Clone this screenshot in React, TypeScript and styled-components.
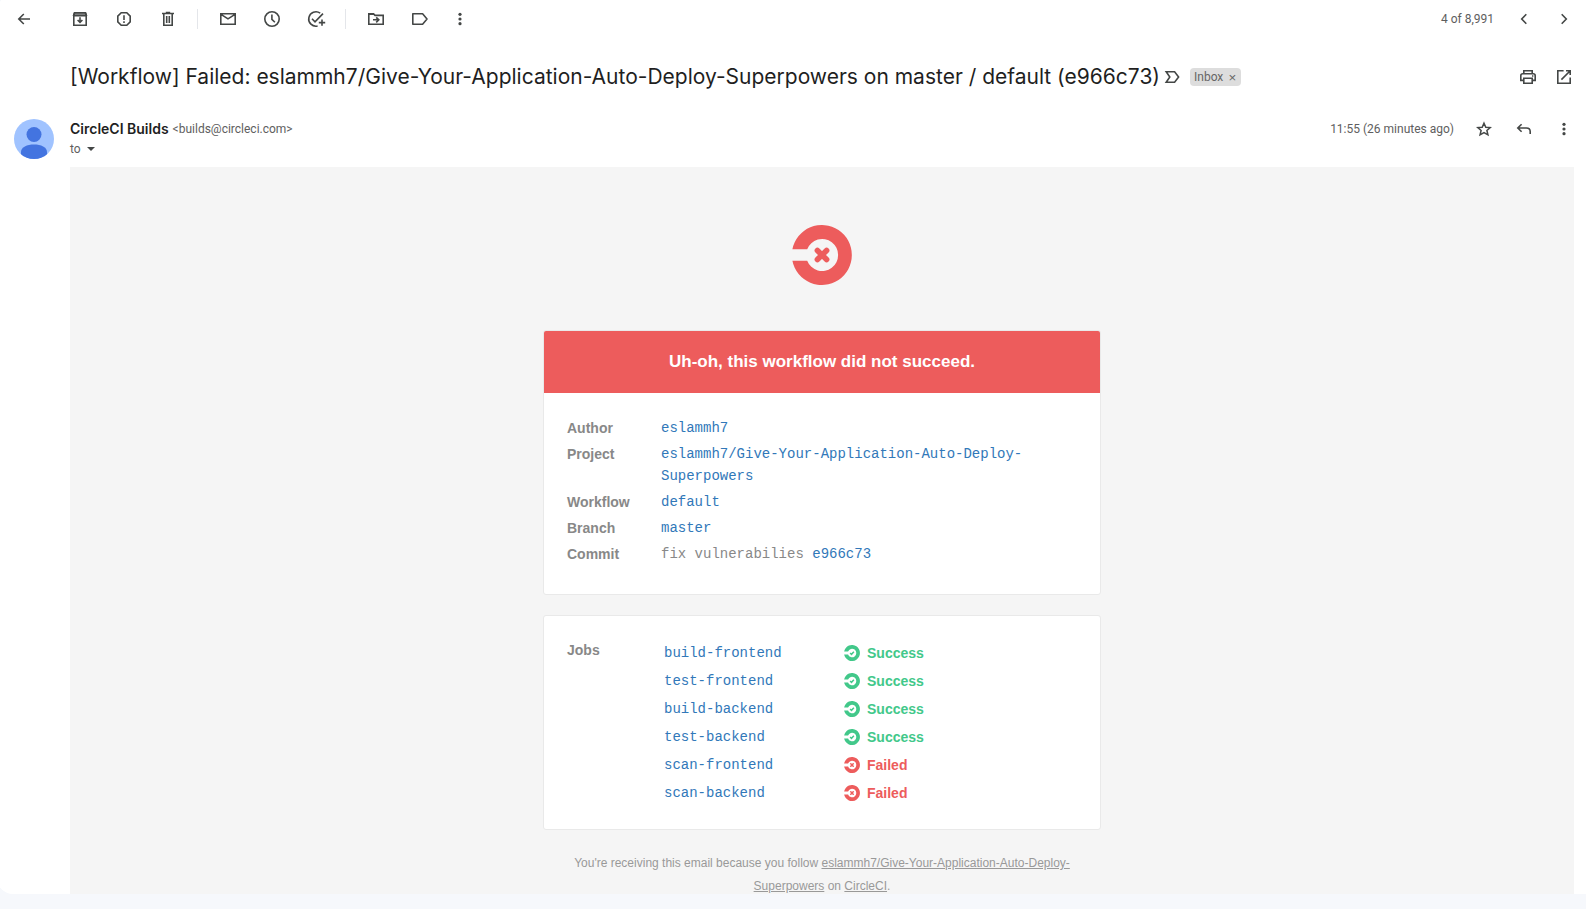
import React from 'react';
import styled, { createGlobalStyle } from 'styled-components';

const GlobalStyle = createGlobalStyle`
  *, *::before, *::after { box-sizing: border-box; }
  html, body { height: 100%; }
  body {
    margin: 0;
    overflow: hidden;
    background: #f6f8fc;
    color: #1f1f1f;
    font-family: Inter, 'Liberation Sans', sans-serif;
  }
`;

/* ---------- mail frame ---------- */

const Panel = styled.main`
  display: flex;
  flex-direction: column;
  height: calc(100vh - 10px);
  margin: -5px 0 0 -3px;
  padding: 5px 0 0 3px;
  overflow: hidden;
  background: #fff;
  border-radius: 16px 0 0 16px;
`;

const Toolbar = styled.header`
  display: flex;
  flex: none;
  align-items: center;
  height: 38px;
  padding: 0 12px 0 14px;
`;

const Actions = styled.div<{ $gap: number }>`
  display: flex;
  align-items: center;
  gap: ${(p) => p.$gap}px;
`;

const BackSlot = styled.div`
  display: flex;
  width: 56px;
`;

const Divider = styled.span`
  width: 1px;
  height: 20px;
  margin: 0 -4px 0 -5px;
  background: #e4e6ea;
`;

const Pager = styled.div`
  display: flex;
  align-items: center;
  gap: 20px;
  margin-left: auto;
`;

const IconButton = styled.button`
  display: flex;
  flex: none;
  width: 20px;
  height: 20px;
  padding: 0;
  border: 0;
  background: none;
  color: #444746;
  cursor: pointer;
`;

const Glyph = styled.svg`
  display: block;
  width: 20px;
  height: 20px;
  fill: none;
  stroke: currentColor;
  stroke-width: 1.6;
`;

const Muted = styled.span`
  color: #5e5e5e;
  font-family: Roboto, 'Liberation Sans', sans-serif;
  font-size: 12px;
  line-height: 20px;
  white-space: nowrap;
`;

const SubjectRow = styled.div`
  display: flex;
  flex: none;
  align-items: center;
  height: 78px;
  padding: 0 12px 0 70px;
`;

const Subject = styled.h1`
  margin: 0 2px 0 0;
  font-size: 21px;
  font-weight: 400;
  line-height: 28px;
  white-space: nowrap;
`;

const Chip = styled.span`
  display: flex;
  align-items: center;
  gap: 4px;
  height: 18px;
  margin-left: 8px;
  padding: 0 4px;
  border-radius: 4px;
  background: #ddd;
  color: #666;
  font-family: Roboto, 'Liberation Sans', sans-serif;
  font-size: 12px;
`;

const ChipClose = styled.button`
  display: flex;
  align-items: center;
  justify-content: center;
  width: 10px;
  height: 16px;
  padding: 0;
  border: 0;
  background: none;
  color: #666;
  cursor: pointer;
`;

const PushRight = styled.div`
  display: flex;
  align-items: center;
  gap: 16px;
  margin-left: auto;
`;

const SenderRow = styled.div`
  display: grid;
  flex: none;
  grid-template-columns: 56px 1fr auto;
  align-items: start;
  padding: 3px 12px 8px 14px;
`;

const Avatar = styled.svg`
  display: block;
  width: 40px;
  height: 40px;
`;

const SenderLine = styled.div<{ $gap: number }>`
  display: flex;
  align-items: center;
  gap: ${(p) => p.$gap}px;
  height: 20px;
`;

const SenderName = styled.strong`
  font-size: 14px;
  font-weight: 600;
  line-height: 20px;
`;

const DetailsButton = styled.button`
  display: flex;
  width: 20px;
  height: 20px;
  padding: 0;
  border: 0;
  background: none;
  color: #444746;
  cursor: pointer;
`;

const SenderMeta = styled.div`
  display: flex;
  align-items: center;
  gap: 20px;
`;

/* ---------- email content ---------- */

const Letter = styled.article`
  display: flex;
  flex: 1;
  flex-direction: column;
  align-items: center;
  min-height: 0;
  margin: 0 12px 0 70px;
  padding: 58px 20px 0;
  overflow: hidden;
  background: #f5f5f5;
  color: #888;
  font-family: 'Liberation Sans', Arial, sans-serif;
`;

const StatusMark = styled.svg<{ $size: number; $color: string }>`
  display: block;
  flex: none;
  width: ${(p) => p.$size}px;
  height: ${(p) => p.$size}px;
  color: ${(p) => p.$color};
`;

const Card = styled.section`
  flex: none;
  width: 100%;
  max-width: 558px;
  margin-bottom: 20px;
  overflow: hidden;
  border: 1px solid #e9e9e9;
  border-radius: 3px;
  background: #fff;
`;

const LogoSlot = styled.div`
  margin-bottom: 45px;
`;

const Banner = styled.h2`
  margin: 0;
  padding: 20px;
  background: #ed5c5c;
  color: #fff;
  font-size: 17px;
  font-weight: 700;
  line-height: 22px;
  text-align: center;
`;

const CardBody = styled.div<{ $top: number; $bottom: number }>`
  padding: ${(p) => p.$top}px 23px ${(p) => p.$bottom}px;
`;

const Facts = styled.table`
  width: 100%;
  border-collapse: collapse;
  font-size: 14px;
  line-height: 22px;

  th, td { padding: 0 0 4px; text-align: left; vertical-align: top; }
  th { width: 94px; font-weight: 700; }
  td { font-family: 'Liberation Mono', 'Courier New', monospace; }
`;

const JobsLayout = styled.div`
  display: grid;
  grid-template-columns: 97px 1fr;
`;

const JobsTitle = styled.h3`
  margin: 0;
  font-size: 14px;
  font-weight: 700;
  line-height: 22px;
`;

const JobsTable = styled.table`
  border-collapse: collapse;
  font-size: 14px;

  td { height: 28px; padding: 0; line-height: 22px; }
  td:first-child {
    width: 180px;
    font-family: 'Liberation Mono', 'Courier New', monospace;
  }
`;

const Status = styled.div<{ $color: string }>`
  display: flex;
  align-items: center;
  gap: 7px;
  color: ${(p) => p.$color};
  font-weight: 700;
`;

const MailLink = styled.a`
  color: #3178b9;
  text-decoration: none;
`;

const Footer = styled.footer`
  flex: none;
  width: 100%;
  max-width: 512px;
  padding-top: 2px;
  color: #999;
  font-size: 12px;
  line-height: 23px;
  text-align: center;

  a { color: #999; text-decoration: underline; }
`;

/* ---------- icons ---------- */

const icons = {
  back: <path d="M16 10H5M9.8 5 4.8 10l5 5" />,
  archive: (
    <>
      <path d="M4.5 3.8h11l.8 2.4H3.7z" fill="#b5b6b6" />
      <path d="M3.8 6v10.2h12.4V6L15.3 3.8H4.7zM3.8 6.7h12.4M10 8.2v5M7.6 11l2.4 2.4 2.4-2.4" />
    </>
  ),
  report: (
    <>
      <path d="M7.2 3.8h5.6l3.4 3.4v5.6l-3.4 3.4H7.2l-3.4-3.4V7.2z" />
      <path d="M10 6.3v4.6M10 12.3v1.6" />
    </>
  ),
  trash: <path d="M4 4.5h12M7.8 3.6h4.4M5.8 4.8v11.4h8.4V4.8M8.7 7v7M11.3 7v7" />,
  mail: <path d="M2.8 4.8h14.4v10.4H2.8zM3 5.4l7 4.5 7-4.5" />,
  snooze: (
    <>
      <circle cx="10" cy="10" r="7.2" />
      <path d="M9.9 5.6v4.7l3 3" />
    </>
  ),
  addTask: <path d="M14.2 4.2A7.2 7.2 0 1 0 11.6 17M6 9.8l3 3L17 4.6M16 10.4v6.4M12.8 13.6h6.4" />,
  move: (
    <>
      <path d="M2 4h5.6l1.8 2H2z" fill="currentColor" stroke="none" />
      <path d="M2.8 4.8h4.6l1.6 1.6h8.2v8.8H2.8zM7 10.8h5M10.2 8.3l2.6 2.5-2.6 2.5" />
    </>
  ),
  label: <path d="M2.8 4.8h9.8l4.4 5.2-4.4 5.2H2.8z" strokeLinejoin="round" />,
  more: (
    <g fill="currentColor" stroke="none">
      <circle cx="10" cy="5.3" r="1.6" />
      <circle cx="10" cy="10" r="1.6" />
      <circle cx="10" cy="14.7" r="1.6" />
    </g>
  ),
  prev: <path d="m12.3 5.3-4.6 4.7 4.6 4.7" />,
  next: <path d="m7.7 5.3 4.6 4.7-4.6 4.7" />,
  important: <path d="M4.2 4.8h8.4l4 5.2-4 5.2H4.2L7.8 10z" />,
  print: (
    <>
      <path d="M5.8 6.6V3.8h8.4v2.8M5.6 13.4H2.8V8.8Q2.8 6.8 4.8 6.8h10.4q2 0 2 2v4.6h-2.8M5.8 11.2h8.4v5H5.8z" />
      <path d="M14 9h1.4" />
    </>
  ),
  open: <path d="M9.6 3.8H3.8v12.4h12.4v-5.8M12 3.8h4.2V8M16 4l-8.6 8.6" />,
  star: <path d="m10 4.2 1.8 4 4.4.4-3.3 2.9 1 4.3-3.9-2.3-3.9 2.3 1-4.3-3.3-2.9 4.4-.4z" strokeWidth="1.5" />,
  reply: <path d="M7.6 5.2 3.8 9l3.8 3.8M4 9h8.4q3.8 0 3.8 3.6V15" />,
  caret: <path d="M6 8h8l-4 4z" fill="currentColor" stroke="none" />,
};

type IconName = keyof typeof icons;

const Action = ({ icon, label }: { icon: IconName; label: string }) => (
  <IconButton type="button" aria-label={label}>
    <Glyph viewBox="0 0 20 20">{icons[icon]}</Glyph>
  </IconButton>
);

const RED = '#ed5c5c';
const GREEN = '#42c88a';

const CircleMark = ({ ok = false, size }: { ok?: boolean; size: number }) => (
  <StatusMark $size={size} $color={ok ? GREEN : RED} viewBox="0 0 60 60" fill="none" aria-hidden>
    <path
      fill="currentColor"
      d="M.4 24.2A30 30 0 1 1 .4 35.8H15.2A16 16 0 1 0 15.2 24.2Z"
    />
    {ok ? (
      <path d="m23 30 5 5 9-10" stroke="currentColor" strokeWidth="5.5" />
    ) : (
      <path
        d="m25.4 25.4 9.2 9.2M34.6 25.4l-9.2 9.2"
        stroke="currentColor"
        strokeWidth="5.6"
        strokeLinecap="round"
      />
    )}
  </StatusMark>
);

/* ---------- data ---------- */

const repo = 'eslammh7/Give-Your-Application-Auto-Deploy-Superpowers';

const jobs = [
  { name: 'build-frontend', ok: true },
  { name: 'test-frontend', ok: true },
  { name: 'build-backend', ok: true },
  { name: 'test-backend', ok: true },
  { name: 'scan-frontend', ok: false },
  { name: 'scan-backend', ok: false },
];

const facts = [
  { label: 'Author', link: 'eslammh7' },
  { label: 'Project', link: repo },
  { label: 'Workflow', link: 'default' },
  { label: 'Branch', link: 'master' },
  { label: 'Commit', text: 'fix vulnerabilies ', link: 'e966c73' },
];

export default function App() {
  return (
    <>
      <GlobalStyle />
      <Panel>
        <Toolbar>
          <BackSlot>
            <Action icon="back" label="Back to inbox" />
          </BackSlot>
          <Actions $gap={24}>
            <Action icon="archive" label="Archive" />
            <Action icon="report" label="Report spam" />
            <Action icon="trash" label="Delete" />
            <Divider />
            <Action icon="mail" label="Mark as unread" />
            <Action icon="snooze" label="Snooze" />
            <Action icon="addTask" label="Add to tasks" />
            <Divider />
            <Action icon="move" label="Move to" />
            <Actions $gap={20}>
              <Action icon="label" label="Labels" />
              <Action icon="more" label="More" />
            </Actions>
          </Actions>
          <Pager>
            <Muted>4 of 8,991</Muted>
            <Action icon="prev" label="Newer" />
            <Action icon="next" label="Older" />
          </Pager>
        </Toolbar>

        <SubjectRow>
          <Subject>[Workflow] Failed: {repo} on master / default (e966c73)</Subject>
          <Action icon="important" label="Mark as important" />
          <Chip>
            Inbox
            <ChipClose type="button" aria-label="Remove label Inbox">×</ChipClose>
          </Chip>
          <PushRight>
            <Action icon="print" label="Print" />
            <Action icon="open" label="Open in new window" />
          </PushRight>
        </SubjectRow>

        <SenderRow>
          <Avatar viewBox="0 0 40 40" aria-hidden>
            <clipPath id="avatar">
              <circle cx="20" cy="20" r="20" />
            </clipPath>
            <g clipPath="url(#avatar)">
              <path fill="#a0c3ff" d="M0 0h40v40H0z" />
              <circle cx="20" cy="15.5" r="7.5" fill="#4374e0" />
              <path fill="#4374e0" d="M7 33c0-5 6-7.5 13-7.5S33 28 33 33v9H7z" />
            </g>
          </Avatar>
          <div>
            <SenderLine $gap={4}>
              <SenderName>CircleCI Builds</SenderName>
              <Muted>&lt;builds@circleci.com&gt;</Muted>
            </SenderLine>
            <SenderLine $gap={0}>
              <Muted>to</Muted>
              <DetailsButton type="button" aria-label="Show details">
                <Glyph viewBox="0 0 20 20">{icons.caret}</Glyph>
              </DetailsButton>
            </SenderLine>
          </div>
          <SenderMeta>
            <Muted>11:55 (26 minutes ago)</Muted>
            <Action icon="star" label="Star" />
            <Action icon="reply" label="Reply" />
            <Action icon="more" label="More message options" />
          </SenderMeta>
        </SenderRow>

        <Letter>
          <LogoSlot>
            <CircleMark size={60} />
          </LogoSlot>
          <Card>
            <Banner>Uh-oh, this workflow did not succeed.</Banner>
            <CardBody $top={24} $bottom={25}>
              <Facts>
                <tbody>
                  {facts.map((fact) => (
                    <tr key={fact.label}>
                      <th scope="row">{fact.label}</th>
                      <td>
                        {fact.text}
                        <MailLink href="#">{fact.link}</MailLink>
                      </td>
                    </tr>
                  ))}
                </tbody>
              </Facts>
            </CardBody>
          </Card>
          <Card>
            <CardBody $top={23} $bottom={22}>
              <JobsLayout>
                <JobsTitle>Jobs</JobsTitle>
                <JobsTable>
                  <tbody>
                    {jobs.map((job) => (
                      <tr key={job.name}>
                        <td>
                          <MailLink href="#">{job.name}</MailLink>
                        </td>
                        <td>
                          <Status $color={job.ok ? GREEN : RED}>
                            <CircleMark ok={job.ok} size={16} />
                            {job.ok ? 'Success' : 'Failed'}
                          </Status>
                        </td>
                      </tr>
                    ))}
                  </tbody>
                </JobsTable>
              </JobsLayout>
            </CardBody>
          </Card>
          <Footer>
            You're receiving this email because you follow <a href="#">{repo}</a> on{' '}
            <a href="#">CircleCI</a>.
          </Footer>
        </Letter>
      </Panel>
    </>
  );
}
